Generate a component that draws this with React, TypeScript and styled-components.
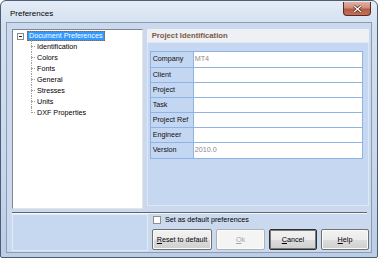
import React from "react";
import styled, { createGlobalStyle } from "styled-components";

const Global = createGlobalStyle`
  html, body { margin: 0; padding: 0; background: #ffffff; }
  body { font-family: "Liberation Sans", Arial, sans-serif; }
  * { box-sizing: border-box; }
`;

const Window = styled.div`
  width: 378px;
  height: 258px;
  border: 1px solid #4d5d72;
  border-radius: 6px 6px 2px 2px;
  background: linear-gradient(180deg, #e4ecf6 0%, #d3e0f0 10%, #c9d8ec 60%, #bccde6 100%);
  display: flex;
  flex-direction: column;
  padding: 0 5px 4px 5px;
`;

const TitleBar = styled.div`
  height: 21px;
  display: flex;
  align-items: flex-start;
`;

const Title = styled.div`
  font-size: 8px;
  color: #000;
  margin: 8px 0 0 4px;
  line-height: 9px;
`;

const CloseButton = styled.div`
  margin: 1px 1px 0 auto;
  width: 28px;
  height: 14px;
  border: 1px solid #5a2a22;
  border-top: none;
  border-radius: 0 0 4px 4px;
  background: linear-gradient(180deg, #e2b0a2 0%, #cf8e7c 45%, #b65a44 55%, #c27058 100%);
  display: flex;
  align-items: center;
  justify-content: center;
`;

const Client = styled.div`
  flex: 1;
  border: 1px solid #8b9cb3;
  background: #cbd9ee;
  display: flex;
  flex-direction: column;
  padding: 6px 2px 1px 5px;
`;

const Main = styled.div`
  height: 180px;
  display: flex;
  gap: 4px;
`;

const TreePanel = styled.div`
  width: 131px;
  background: #ffffff;
  border-top: 1px solid #828790;
  border-left: 1px solid #828790;
  border-right: 1px solid #e4e4e4;
  border-bottom: 1px solid #e4e4e4;
  padding: 1px 0 0 3px;
  font-size: 7.2px;
  color: #000;
`;

const RootRow = styled.div`
  display: flex;
  align-items: center;
  height: 10px;
`;

const ExpandBox = styled.div`
  width: 7px;
  height: 7px;
  border: 1px solid #8a8a8a;
  background: #fff;
  margin-left: 1px;
  display: flex;
  align-items: center;
  justify-content: center;
  &::after {
    content: "";
    width: 3px;
    height: 1px;
    background: #222;
  }
`;

const Selected = styled.div`
  margin-left: 3px;
  height: 10px;
  line-height: 8px;
  padding: 0 1px;
  background: #3399ff;
  color: #fff;
  border: 1px dotted #a05a2c;
  white-space: nowrap;
`;

const Children = styled.div`
  margin-left: 15px;
`;

const Child = styled.div<{ $first?: boolean; $last?: boolean }>`
  position: relative;
  height: 11px;
  line-height: 11px;
  padding-left: 6px;
  white-space: nowrap;
  &::before {
    content: "";
    position: absolute;
    left: 0;
    top: 5px;
    width: 4px;
    border-top: 1px dotted #a0a0a0;
  }
  &::after {
    content: "";
    position: absolute;
    left: 0;
    top: ${(p) => (p.$first ? "-1px" : "0")};
    height: ${(p) => (p.$last ? "6px" : p.$first ? "12px" : "11px")};
    border-left: 1px dotted #a0a0a0;
  }
`;

const RightPanel = styled.div`
  width: 223px;
  display: flex;
  flex-direction: column;
`;

const Header = styled.div`
  height: 13px;
  background: #eef0f3;
  font-size: 7.7px;
  font-weight: bold;
  color: #7a5a48;
  padding: 3px 0 0 5px;
  line-height: 8px;
`;

const BluePanel = styled.div`
  flex: 1;
  background: #c6d8f1;
  border: 1px solid #dde7f6;
  padding: 8px 4px 0 2px;
  margin-bottom: 3px;
`;

const Table = styled.table`
  width: 213px;
  border-collapse: collapse;
  font-size: 7.2px;
  border: 1px solid #7ea6dc;
`;

const Row = styled.tr<{ $h: number }>`
  height: ${(p) => p.$h}px;
`;

const LabelCell = styled.td`
  width: 43px;
  padding: 0 2px 2px 2px;
  border: 1px solid #8fb4e4;
  background: #c3d6f2;
  color: #111;
  vertical-align: middle;
  white-space: nowrap;
`;

const ValueCell = styled.td`
  padding: 0 1px 2px 1px;
  border: 1px solid #8fb4e4;
  background: #ffffff;
  color: #8a8a8a;
  vertical-align: middle;
`;

const Separator = styled.div`
  margin-top: 3px;
  width: 355px;
  height: 2px;
  border-top: 1px solid #5f6670;
  border-bottom: 1px solid #f4f7fb;
`;

const Bottom = styled.div`
  display: flex;
  gap: 4px;
  height: 37px;
`;

const InfoPanel = styled.div`
  width: 137px;
  background: #c6d7f0;
  border: 1px solid #e2eaf6;
`;

const Actions = styled.div`
  display: flex;
  flex-direction: column;
  padding-top: 1px;
`;

const CheckRow = styled.label`
  display: flex;
  align-items: center;
  gap: 4px;
  height: 9px;
  margin-left: 1px;
  font-size: 7.2px;
  color: #000;
`;

const CheckBox = styled.span`
  width: 8px;
  height: 8px;
  border: 1px solid #8e8f8f;
  background: #fff;
`;

const ButtonRow = styled.div`
  display: flex;
  gap: 4px;
  margin-top: 5px;
`;

const Button = styled.button<{ $w: number; $default?: boolean; $disabled?: boolean }>`
  width: ${(p) => p.$w}px;
  height: 21px;
  padding: 0;
  font-family: "Liberation Sans", Arial, sans-serif;
  font-size: 7.2px;
  color: ${(p) => (p.$disabled ? "#a6a6a6" : "#000")};
  border: 1px solid ${(p) => (p.$disabled ? "#adb2b5" : p.$default ? "#303030" : "#707070")};
  box-shadow: ${(p) => (p.$default ? "inset 0 0 0 1px #7a7a7a" : "inset 0 0 0 1px #fbfbfb")};
  border-radius: 2px;
  background: ${(p) =>
    p.$disabled
      ? "#f4f4f4"
      : "linear-gradient(180deg, #f2f2f2 0%, #ebebeb 50%, #dddddd 51%, #cfcfcf 100%)"};
  u { text-decoration: underline; }
`;

const labels = ["Company", "Client", "Project", "Task", "Project Ref", "Engineer", "Version"];
const values: Record<string, string> = { Company: "MT4", Version: "2010.0" };
const tree = ["Identification", "Colors", "Fonts", "General", "Stresses", "Units", "DXF Properties"];

export default function App() {
  return (
    <>
      <Global />
      <Window>
        <TitleBar>
          <Title>Preferences</Title>
          <CloseButton>
            <svg width="9" height="8" viewBox="0 0 9 8">
              <path d="M1 1 L8 7 M8 1 L1 7" stroke="#4a1a10" strokeWidth="2.6" />
              <path d="M1 1 L8 7 M8 1 L1 7" stroke="#ffffff" strokeWidth="1.4" />
            </svg>
          </CloseButton>
        </TitleBar>
        <Client>
          <Main>
            <TreePanel>
              <RootRow>
                <ExpandBox />
                <Selected>Document Preferences</Selected>
              </RootRow>
              <Children>
                {tree.map((t, i) => (
                  <Child key={t} $first={i === 0} $last={i === tree.length - 1}>
                    {t}
                  </Child>
                ))}
              </Children>
            </TreePanel>
            <RightPanel>
              <Header>Project Identification</Header>
              <BluePanel>
                <Table>
                  <tbody>
                    {labels.map((l, i) => (
                      <Row key={l} $h={i === 0 || i === labels.length - 1 ? 16 : 15}>
                        <LabelCell>{l}</LabelCell>
                        <ValueCell>{values[l] ?? ""}</ValueCell>
                      </Row>
                    ))}
                  </tbody>
                </Table>
              </BluePanel>
            </RightPanel>
          </Main>
          <Separator />
          <Bottom>
            <InfoPanel />
            <Actions>
              <CheckRow>
                <CheckBox />
                Set as default preferences
              </CheckRow>
              <ButtonRow>
                <Button $w={60}>
                  <u>R</u>eset to default
                </Button>
                <Button $w={49} $disabled>
                  <u>O</u>k
                </Button>
                <Button $w={48} $default>
                  <u>C</u>ancel
                </Button>
                <Button $w={48}>
                  <u>H</u>elp
                </Button>
              </ButtonRow>
            </Actions>
          </Bottom>
        </Client>
      </Window>
    </>
  );
}
